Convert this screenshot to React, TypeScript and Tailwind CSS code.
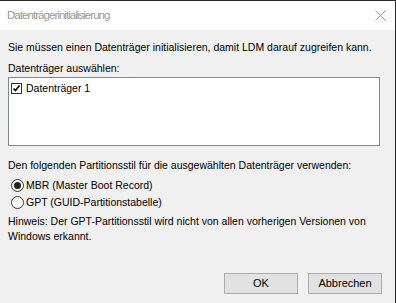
import React from "react";

const ui = { fontFamily: '"Liberation Sans", Arial, sans-serif' };

function CheckBox() {
  return (
    <span className="flex h-[11px] w-[11px] shrink-0 items-center justify-center border border-[#333] bg-white">
      <svg width="9" height="9" viewBox="0 0 9 9">
        <path d="M1.5 4.5 L3.5 6.5 L7.5 1.5" fill="none" stroke="#000" strokeWidth="1.6" />
      </svg>
    </span>
  );
}

function Radio({ checked }: { checked?: boolean }) {
  return (
    <span className="flex h-[13px] w-[13px] shrink-0 items-center justify-center rounded-full border border-[#333] bg-white">
      {checked && <span className="h-[7px] w-[7px] rounded-full bg-[#222]" />}
    </span>
  );
}

export default function App() {
  return (
    <div
      className="flex h-[303px] w-[396px] flex-col border-t border-r border-[#2b2b2b] bg-[#f0f0f0] text-[10.5px] text-black"
      style={ui}
    >
      <div className="flex h-[29px] shrink-0 items-center justify-between bg-white pl-[7px] pr-[9px]">
        <span className="text-[11.5px] tracking-[-0.95px] text-[#999]">Datenträgerinitialisierung</span>
        <svg width="11" height="11" viewBox="0 0 11 11">
          <path d="M0.5 0.5 L10.5 10.5 M10.5 0.5 L0.5 10.5" stroke="#999" strokeWidth="1" />
        </svg>
      </div>

      <div className="flex flex-1 flex-col pl-[8px] pr-[15px]">
        <p className="mt-[11px] leading-[13px]">
          Sie müssen einen Datenträger initialisieren, damit LDM darauf zugreifen kann.
        </p>
        <p className="mt-[8px] leading-[13px]">Datenträger auswählen:</p>
        <div className="mt-[2px] h-[69px] border border-[#828790] bg-white px-[2px] pt-[4px]">
          <label className="flex items-center gap-[4px]">
            <CheckBox />
            <span className="leading-[13px]">Datenträger 1</span>
          </label>
        </div>

        <p className="mt-[13px] leading-[13px]">
          Den folgenden Partitionsstil für die ausgewählten Datenträger verwenden:
        </p>
        <div className="mt-[7px] flex flex-col gap-[4px] pl-[3px]">
          <label className="flex items-center gap-[2px]">
            <Radio checked />
            <span className="leading-[13px]">MBR (Master Boot Record)</span>
          </label>
          <label className="flex items-center gap-[2px]">
            <Radio />
            <span className="leading-[13px]">GPT (GUID-Partitionstabelle)</span>
          </label>
        </div>
        <p className="mt-[5px] leading-[15px]">
          Hinweis: Der GPT-Partitionsstil wird nicht von allen vorherigen Versionen von Windows erkannt.
        </p>

        <div className="mt-auto mb-[9px] mr-[-2px] flex justify-end gap-[10px]">
          <button className="h-[21px] w-[74px] border border-[#adadad] bg-[#e1e1e1] text-[11px]">OK</button>
          <button className="h-[21px] w-[74px] border border-[#adadad] bg-[#e1e1e1] text-[11px]">
            Abbrechen
          </button>
        </div>
      </div>
    </div>
  );
}
